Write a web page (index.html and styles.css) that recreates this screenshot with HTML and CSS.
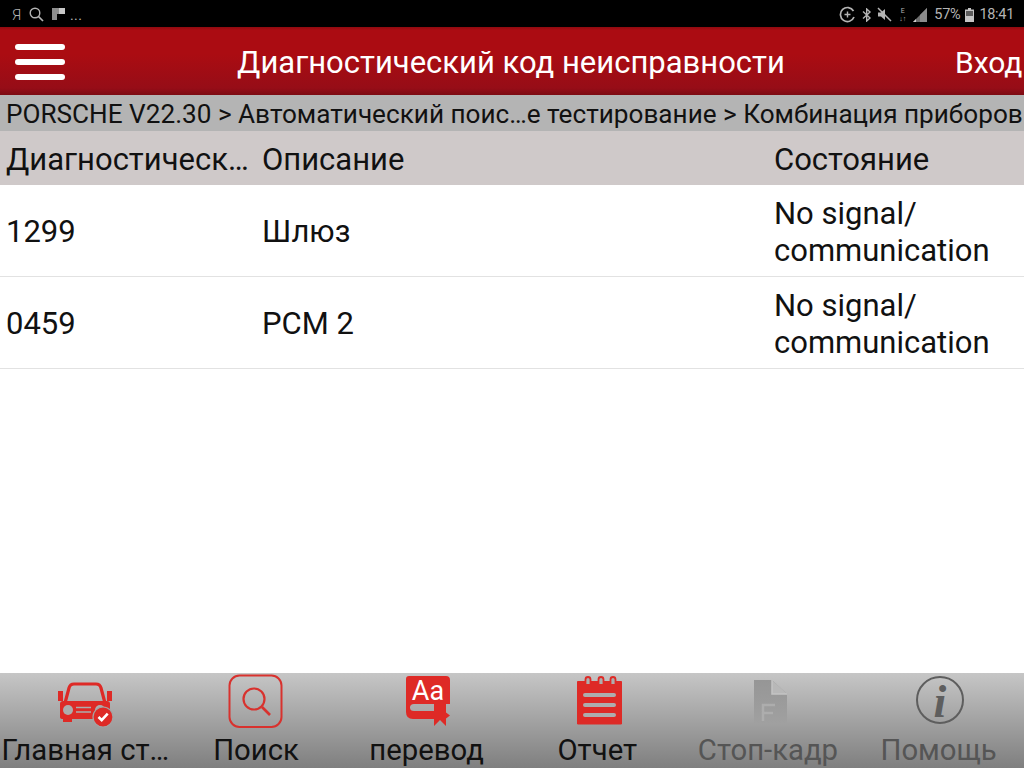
FILE: index.html
```html
<!DOCTYPE html>
<html lang="ru">
<head>
  <meta charset="UTF-8">
  <title>Диагностический код неисправности</title>
  <link rel="stylesheet" href="styles.css">
</head>
<body>
  <div class="screen">
    <!-- Android status bar -->
    <div class="status-bar">
      <div class="status-left">
        <span class="ya">Я</span>
        <svg class="st-icon" width="15" height="15" viewBox="0 0 15 15"><circle cx="6" cy="6" r="4.8" fill="none" stroke="#b4b4b4" stroke-width="1.4"/><path d="M9.500 9.500 14 14" stroke="#b4b4b4" stroke-width="1.700"/></svg>
        <svg class="st-icon" width="13" height="13" viewBox="0 0 13 13"><path d="M0 0h7v6H5v6H0z" fill="#8e8e8e"/><path d="M7 0h6v6H7z" fill="#c8c8c8"/></svg>
        <span class="dots">...</span>
      </div>
      <div class="status-right">
        <svg width="17" height="17" viewBox="0 0 17 17"><path d="M14.500 5A7 7 0 1 0 15 11" fill="none" stroke="#b4b4b4" stroke-width="1.700"/><path d="M8.500 5.500v6M5.500 8.500h6" stroke="#b4b4b4" stroke-width="1.400"/></svg>
        <svg class="bt" width="10" height="14" viewBox="0 0 10 14"><path d="M1 3.500 8 10 4.700 13V1L8 4 1 10.500" fill="none" stroke="#b4b4b4" stroke-width="1.400"/></svg>
        <svg class="mute" width="15" height="15" viewBox="0 0 15 15"><path d="M1 5.500h3L8 2v11L4 9.500H1z" fill="#b4b4b4"/><path d="M1 1l13 13" stroke="#b4b4b4" stroke-width="1.500"/></svg>
        <span class="net">E<br>↓↑</span>
        <svg class="signal" width="14" height="14" viewBox="0 0 14 14"><path d="M14 0v14H0z" fill="#6e6e6e"/><path d="M14 0v14H7V7z" fill="#8c8c8c"/><path d="M0 14h3v-3z" fill="#d0d0d0"/></svg>
        <span class="pct">57%</span>
        <svg class="batt" width="9" height="14" viewBox="0 0 9 14"><path d="M3 0h3v1.500h3V14H0V1.500h3z" fill="#c4c4c4"/><path d="M1 3h7v5H1z" fill="#5c5c5c"/></svg>
        <span class="clock">18:41</span>
      </div>
    </div>

    <!-- Title bar -->
    <header class="title-bar">
      <div class="burger"><i></i><i></i><i></i></div>
      <h1>Диагностический код неисправности</h1>
      <span class="login">Вход</span>
    </header>

    <div class="crumbs">PORSCHE V22.30 &gt; Автоматический поис…е тестирование &gt; Комбинация приборов</div>

    <!-- Fault table -->
    <div class="row head">
      <div class="col-code">Диагностическ…</div>
      <div class="col-desc">Описание</div>
      <div class="col-state">Состояние</div>
    </div>
    <div class="row">
      <div class="col-code">1299</div>
      <div class="col-desc">Шлюз</div>
      <div class="col-state">No signal/<br>communication</div>
    </div>
    <div class="row">
      <div class="col-code">0459</div>
      <div class="col-desc">PCM 2</div>
      <div class="col-state">No signal/<br>communication</div>
    </div>

    <!-- Bottom toolbar -->
    <nav class="toolbar">
      <div class="tool">
        <svg width="58" height="56" viewBox="0 0 58 56">
          <path d="M9 29 13 14Q14 10 18 10H40Q44 10 45 14L49 29" fill="none" stroke="#de2a26" stroke-width="3.200"/>
          <path d="M2 17h5v10H2zM51 17h5v10h-5z" fill="#de2a26"/>
          <path d="M4 30Q4 27 7 27H51Q54 27 54 30V43Q54 45 51 45H7Q4 45 4 43z" fill="#de2a26"/>
          <path d="M7 44h9v4H7zM41 44h9v4h-9z" fill="#de2a26"/>
          <circle cx="12" cy="36" r="5" fill="#adadad"/>
          <circle cx="44" cy="36" r="5" fill="#adadad"/>
          <path d="M20 33.500h15M20 38h15" stroke="#adadad" stroke-width="1.300"/>
          <circle cx="47" cy="43" r="10" fill="#de2a26" stroke="#a4a4a4" stroke-width="1.200"/>
          <path d="M42.500 43l3.200 3.200 6-6.500" fill="none" stroke="#fff" stroke-width="2.600"/>
        </svg>
        <span>Главная ст…</span>
      </div>
      <div class="tool">
        <svg width="58" height="56" viewBox="0 0 58 56">
          <rect x="2.500" y="1.500" width="52" height="51.500" rx="10" fill="none" stroke="#d8322e" stroke-width="2"/>
          <circle cx="27" cy="25" r="10.500" fill="none" stroke="#d8322e" stroke-width="2.200"/>
          <path d="M35 33 43 41" stroke="#d8322e" stroke-width="2.600"/>
        </svg>
        <span>Поиск</span>
      </div>
      <div class="tool">
        <svg width="58" height="56" viewBox="0 0 58 56">
          <path d="M11 2H48Q52 2 52 6V30H16Q12 30 12 33.500T16 37H41V45H15Q8 45 8 38V5Q8 2 11 2z" fill="#de2a26"/>
          <path d="M36 30h12v22l-6-6-6 6z" fill="#de2a26"/>
          <path d="M48 38.500l4 3-4 3z" fill="#de2a26"/>
          <text x="30" y="26" class="aa">Aa</text>
        </svg>
        <span>перевод</span>
      </div>
      <div class="tool">
        <svg width="58" height="56" viewBox="0 0 58 56">
          <path d="M9.500 7.500H53.500V50H9.500z" fill="#de2a26" stroke="#de2a26" stroke-width="1" stroke-linejoin="round"/>
          <path d="M17.500 10V5.500A2.500 2.500 0 0 1 22.500 5.500V10M30.500 10V5.500A2.500 2.500 0 0 1 35.500 5.500V10M42.500 10V5.500A2.500 2.500 0 0 1 47.500 5.500V10" fill="#adadad" stroke="#de2a26" stroke-width="1.800"/>
          <path d="M17 21H46M17 31H46M17 41H46" stroke="#adadad" stroke-width="4" stroke-linecap="round"/>
        </svg>
        <span>Отчет</span>
      </div>
      <div class="tool off">
        <svg width="58" height="56" viewBox="0 0 58 56">
          <defs>
            <linearGradient id="fade" x1="0" y1="0" x2="0" y2="1">
              <stop offset="0" stop-color="#969696"/>
              <stop offset="0.6" stop-color="#9c9c9c"/>
              <stop offset="1" stop-color="#a0a0a0"/>
            </linearGradient>
          </defs>
          <path d="M15 6H33L48 20V49H15z" fill="url(#fade)"/>
          <path d="M33 6V20H48" fill="#b8b8b8" stroke="#c4c4c4" stroke-width="1.500"/>
          <path d="M24 47V31H36M24 39H34" fill="none" stroke="#adadad" stroke-width="2.500"/>
        </svg>
        <span>Стоп-кадр</span>
      </div>
      <div class="tool off">
        <svg width="58" height="56" viewBox="0 0 58 56">
          <circle cx="30" cy="26" r="23" fill="none" stroke="#5e5e5e" stroke-width="2"/>
          <text x="30" y="43" class="info">i</text>
        </svg>
        <span>Помощь</span>
      </div>
    </nav>
  </div>
</body>
</html>
```
FILE: styles.css
```css
* {
  margin: 0;
  padding: 0;
  box-sizing: border-box;
}
body {
  width: 1024px;
  height: 768px;
  overflow: hidden;
  font-family: Roboto, 'Liberation Sans', sans-serif;
  background-color: #fff;
  color: #111;
}
.screen {
  display: flex;
  flex-direction: column;
  height: 768px;
}

/* Status bar */
.status-bar {
  display: flex;
  justify-content: space-between;
  align-items: center;
  height: 27px;
  padding: 2px 10px 0 12px;
  background-color: #000;
  color: #b4b4b4;
  font-size: 14.500px;
  letter-spacing: -0.3px;
  flex-shrink: 0;
}
.status-left, .status-right {
  display: flex;
  align-items: center;
}
.status-left {
  gap: 8px;
}
.ya {
  font-size: 15px;
  font-weight: 300;
}
.dots {
  margin-left: -3px;
  font-size: 14px;
  letter-spacing: 0.5px;
}
.bt {
  margin-left: 6px;
}
.mute {
  margin-left: 5px;
}
.net {
  font-size: 7px;
  line-height: 8px;
  text-align: center;
  letter-spacing: 0;
  margin-left: 7px;
}
.signal {
  margin-left: 7px;
}
.pct {
  margin-left: 7px;
}
.batt {
  margin-left: 5px;
}
.clock {
  margin-left: 5px;
}

/* Title bar */
.title-bar {
  position: relative;
  display: flex;
  align-items: center;
  justify-content: center;
  height: 68px;
  padding-top: 2px;
  background: linear-gradient(#8f0a10 0, #ab0c12 5%, #ab0c12 40%, #960d17 90%, #7c0a12 100%);
  color: #fff;
  flex-shrink: 0;
}
.title-bar h1 {
  font-size: 31px;
  font-weight: 400;
  margin-left: -2px;
}
.burger {
  position: absolute;
  left: 15px;
  top: 17px;
  display: flex;
  flex-direction: column;
  gap: 9px;
}
.burger i {
  display: block;
  width: 50px;
  height: 6px;
  border-radius: 3px;
  background-color: #fff;
}
.login {
  position: absolute;
  left: 955px;
  top: 18px;
  font-size: 30px;
  white-space: nowrap;
}

.crumbs {
  height: 36px;
  line-height: 38px;
  padding-left: 6px;
  background-color: #b4b4b4;
  font-size: 26.150px;
  white-space: nowrap;
  overflow: hidden;
  flex-shrink: 0;
}

/* Table */
.row {
  display: flex;
  align-items: center;
  height: 92px;
  padding-top: 1px;
  border-bottom: 1px solid #e2e2e2;
  font-size: 31px;
  line-height: 37px;
  flex-shrink: 0;
}
.row.head {
  height: 54px;
  padding-top: 3px;
  background-color: #cfc9c9;
  border-bottom: none;
}
.col-code {
  width: 256px;
  padding-left: 6px;
  white-space: nowrap;
}
.col-desc {
  width: 512px;
  padding-left: 6px;
}
.col-state {
  width: 256px;
  padding-left: 6px;
  padding-top: 2px;
  white-space: nowrap;
}
.row.head .col-state {
  padding-top: 0;
}

/* Toolbar */
.toolbar {
  display: flex;
  margin-top: auto;
  height: 95px;
  background: linear-gradient(#c6c6c6, #7f7f7f);
}
.tool {
  display: flex;
  flex-direction: column;
  align-items: center;
  width: 170.660px;
  height: 95px;
  position: relative;
  font-size: 29.300px;
  color: #111;
}
.tool svg {
  position: absolute;
  top: 1px;
  left: 50%;
  margin-left: -29px;
}
.tool span {
  position: absolute;
  top: 60px;
  white-space: nowrap;
}
.tool.off span {
  color: #555;
}
.aa {
  font-family: Roboto, sans-serif;
  font-size: 27px;
  text-anchor: middle;
  fill: #fff;
}
.info {
  font-family: 'Liberation Serif', serif;
  font-size: 46px;
  font-weight: 700;
  font-style: italic;
  text-anchor: middle;
  fill: #5e5e5e;
}
```
